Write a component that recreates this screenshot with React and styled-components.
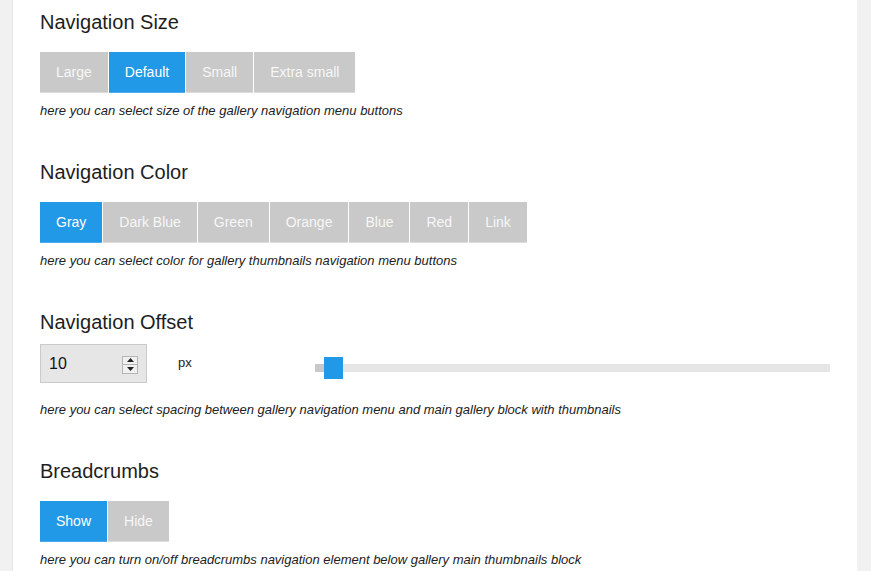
import React, { useState } from 'react'
import styled, { createGlobalStyle } from 'styled-components'

const GlobalStyle = createGlobalStyle`
  html, body {
    margin: 0;
    padding: 0;
    background: #f1f1f1;
    font-family: "Liberation Sans", Arial, sans-serif;
  }
`

const Page = styled.div`
  display: flex;
  min-height: 571px;
  padding-left: 12px;
`

const Panel = styled.div`
  width: 845px;
  background: #fff;
  border-left: 1px solid #e6e6e6;
  padding: 10px 27px 0 27px;
  box-sizing: border-box;
`

const Section = styled.section`
  margin-bottom: 40px;
`

const Title = styled.h3`
  margin: 0 0 18px;
  font-size: 20px;
  line-height: 24px;
  font-weight: normal;
  color: #1e1e1e;
`

const OffsetTitle = styled(Title)`
  margin-bottom: 10px;
`

const ButtonGroup = styled.div`
  display: flex;
  gap: 1px;
`

const OptionButton = styled.button`
  height: 41px;
  padding: 0 16px;
  border: 0;
  border-bottom: 1px solid ${p => (p.$active ? '#4eaaf0' : '#dcdcdc')};
  background: ${p => (p.$active ? '#2299e6' : '#c9c9c9')};
  color: ${p => (p.$active ? '#fff' : '#f7f7f7')};
  font-family: "Liberation Sans", Arial, sans-serif;
  font-size: 14px;
  cursor: pointer;
`

const Hint = styled.p`
  margin: 9px 0 0;
  font-size: 13px;
  line-height: 18px;
  font-style: italic;
  color: #222;
`

const OffsetHint = styled(Hint)`
  margin-top: 18px;
`

const OffsetRow = styled.div`
  display: flex;
  align-items: center;
`

const NumberBox = styled.div`
  width: 107px;
  height: 39px;
  box-sizing: border-box;
  background: #e6e6e6;
  border: 1px solid #cbcbcb;
  display: flex;
  align-items: center;
  padding: 0 8px 0 8px;
  font-size: 16px;
  color: #111;
`

const NumberValue = styled.span`
  flex: 1;
`

const Spinner = styled.div`
  width: 14px;
  height: 16px;
  border: 1px solid #b5b5b5;
  background: #f0f0f0;
  display: flex;
  flex-direction: column;
  margin-top: 2px;
`

const SpinHalf = styled.div`
  flex: 1;
  display: flex;
  align-items: center;
  justify-content: center;
  border-top: ${p => (p.$down ? '1px solid #b5b5b5' : '0')};
`

const Unit = styled.span`
  margin-left: 31px;
  margin-top: -3px;
  font-size: 13px;
  color: #222;
`

const Slider = styled.div`
  flex: 1;
  margin-left: 123px;
  margin-top: 8px;
  height: 8px;
  background: #e5e5e5;
  display: flex;
  align-items: center;
`

const SliderFill = styled.div`
  height: 8px;
  background: #c8c8c8;
`

const Thumb = styled.div`
  width: 19px;
  height: 22px;
  background: #2299e6;
`

const Arrow = ({ down }) => (
  <svg width="7" height="4" viewBox="0 0 7 4">
    <path d={down ? 'M0 0h7L3.5 4z' : 'M0 4h7L3.5 0z'} fill="#222" />
  </svg>
)

function Options({ items, initial }) {
  const [active, setActive] = useState(initial)
  return (
    <ButtonGroup>
      {items.map(item => (
        <OptionButton key={item} $active={active === item} onClick={() => setActive(item)}>
          {item}
        </OptionButton>
      ))}
    </ButtonGroup>
  )
}

export default function App() {
  const offset = 10
  return (
    <Page>
      <GlobalStyle />
      <Panel>
        <Section>
          <Title>Navigation Size</Title>
          <Options items={['Large', 'Default', 'Small', 'Extra small']} initial="Default" />
          <Hint>here you can select size of the gallery navigation menu buttons</Hint>
        </Section>

        <Section>
          <Title>Navigation Color</Title>
          <Options
            items={['Gray', 'Dark Blue', 'Green', 'Orange', 'Blue', 'Red', 'Link']}
            initial="Gray"
          />
          <Hint>here you can select color for gallery thumbnails navigation menu buttons</Hint>
        </Section>

        <Section>
          <OffsetTitle>Navigation Offset</OffsetTitle>
          <OffsetRow>
            <NumberBox>
              <NumberValue>{offset}</NumberValue>
              <Spinner>
                <SpinHalf><Arrow /></SpinHalf>
                <SpinHalf $down><Arrow down /></SpinHalf>
              </Spinner>
            </NumberBox>
            <Unit>px</Unit>
            <Slider>
              <SliderFill style={{ width: offset * 0.9 }} />
              <Thumb />
            </Slider>
          </OffsetRow>
          <OffsetHint>here you can select spacing between gallery navigation menu and main gallery block with thumbnails</OffsetHint>
        </Section>

        <Section>
          <Title>Breadcrumbs</Title>
          <Options items={['Show', 'Hide']} initial="Show" />
          <Hint>here you can turn on/off breadcrumbs navigation element below gallery main thumbnails block</Hint>
        </Section>
      </Panel>
    </Page>
  )
}
